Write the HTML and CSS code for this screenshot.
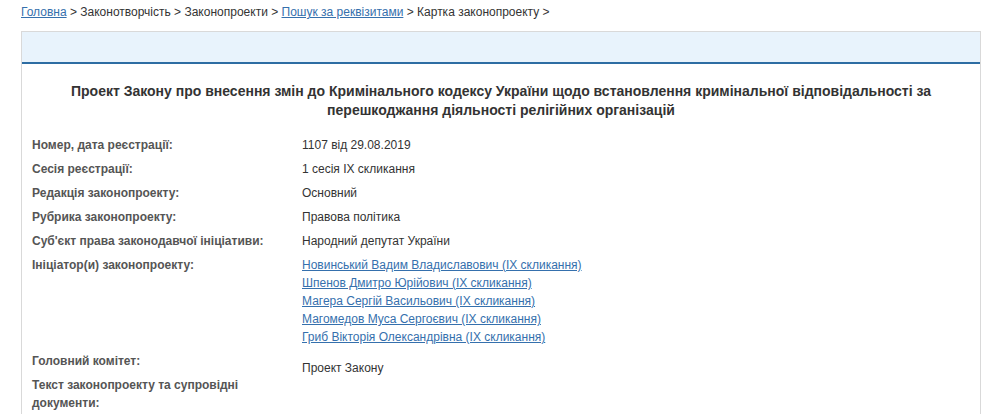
FILE: index.html
```html
<!DOCTYPE html>
<html lang="uk">
    <head>
        <meta charset="utf-8">
        <title>Картка законопроекту</title>
        <link rel="stylesheet" href="styles.css">
    </head>
    <body>
        <div id="crumbs">
            <a href="#">Головна</a> &gt; Законотворчість &gt; Законопроекти &gt;
            <a href="#">Пошук за реквізитами</a> &gt; Картка законопроекту &gt;
        </div>
        <div id="card">
            <div class="band"></div>
            <h1 class="title">Проект Закону про внесення змін до Кримінального кодексу України щодо встановлення кримінальної відповідальності за перешкоджання діяльності релігійних організацій</h1>
            <div class="props">
                <div class="lbl">Номер, дата реєстрації:</div>
                <div class="val">1107 від 29.08.2019</div>

                <div class="lbl">Сесія реєстрації:</div>
                <div class="val">1 сесія IX скликання</div>

                <div class="lbl">Редакція законопроекту:</div>
                <div class="val">Основний</div>

                <div class="lbl">Рубрика законопроекту:</div>
                <div class="val">Правова політика</div>

                <div class="lbl">Суб'єкт права законодавчої ініціативи:</div>
                <div class="val">Народний депутат України</div>

                <div class="lbl">Ініціатор(и) законопроекту:</div>
                <div class="val">
                    <a href="#">Новинський Вадим Владиславович (IX скликання)</a><br>
                    <a href="#">Шпенов Дмитро Юрійович (IX скликання)</a><br>
                    <a href="#">Магера Сергій Васильович (IX скликання)</a><br>
                    <a href="#">Магомедов Муса Сергоєвич (IX скликання)</a><br>
                    <a href="#">Гриб Вікторія Олександрівна (IX скликання)</a>
                </div>

                <div class="lbl">Головний комітет:</div>
                <div class="val docs">Проект Закону</div>

                <div class="lbl narrow">Текст законопроекту та супровідні документи:</div>
            </div>
        </div>
    </body>
</html>
```

FILE: styles.css
```css
body {
    margin: 0;
    background: white;
    color: #333333;
    font-family: "Liberation Sans", Arial, sans-serif;
    font-size: 12px;
}

a {
    color: #3570ad;
}

#crumbs {
    padding: 3px 21px;
    line-height: 18px;
    margin-bottom: 7px;
}

#card {
    margin: 0 16px 0 21px;
    border: 1px solid #d9d9d9;
    border-bottom: none;
    padding-bottom: 10px;
}

#card .band {
    height: 30px;
    background: #e8f3fc;
    border-bottom: 2px solid #2d6da3;
}

.title {
    margin: 0;
    padding: 18px 30px 13px 30px;
    text-align: center;
    font-size: 14px;
    line-height: 19px;
    font-weight: bold;
    color: #333333;
}

.props {
    display: grid;
    grid-template-columns: 270px 1fr;
    padding: 0 10px;
    line-height: 18px;
}

.lbl {
    padding: 3px 0;
    font-weight: bold;
    color: #555555;
}

.lbl.narrow {
    grid-column: 1;
    padding-right: 60px;
}

.val {
    padding: 3px 0;
}

/* the document list sits a little lower and runs into the next row */
.val.docs {
    grid-row: span 2;
    padding-top: 10px;
}
```
